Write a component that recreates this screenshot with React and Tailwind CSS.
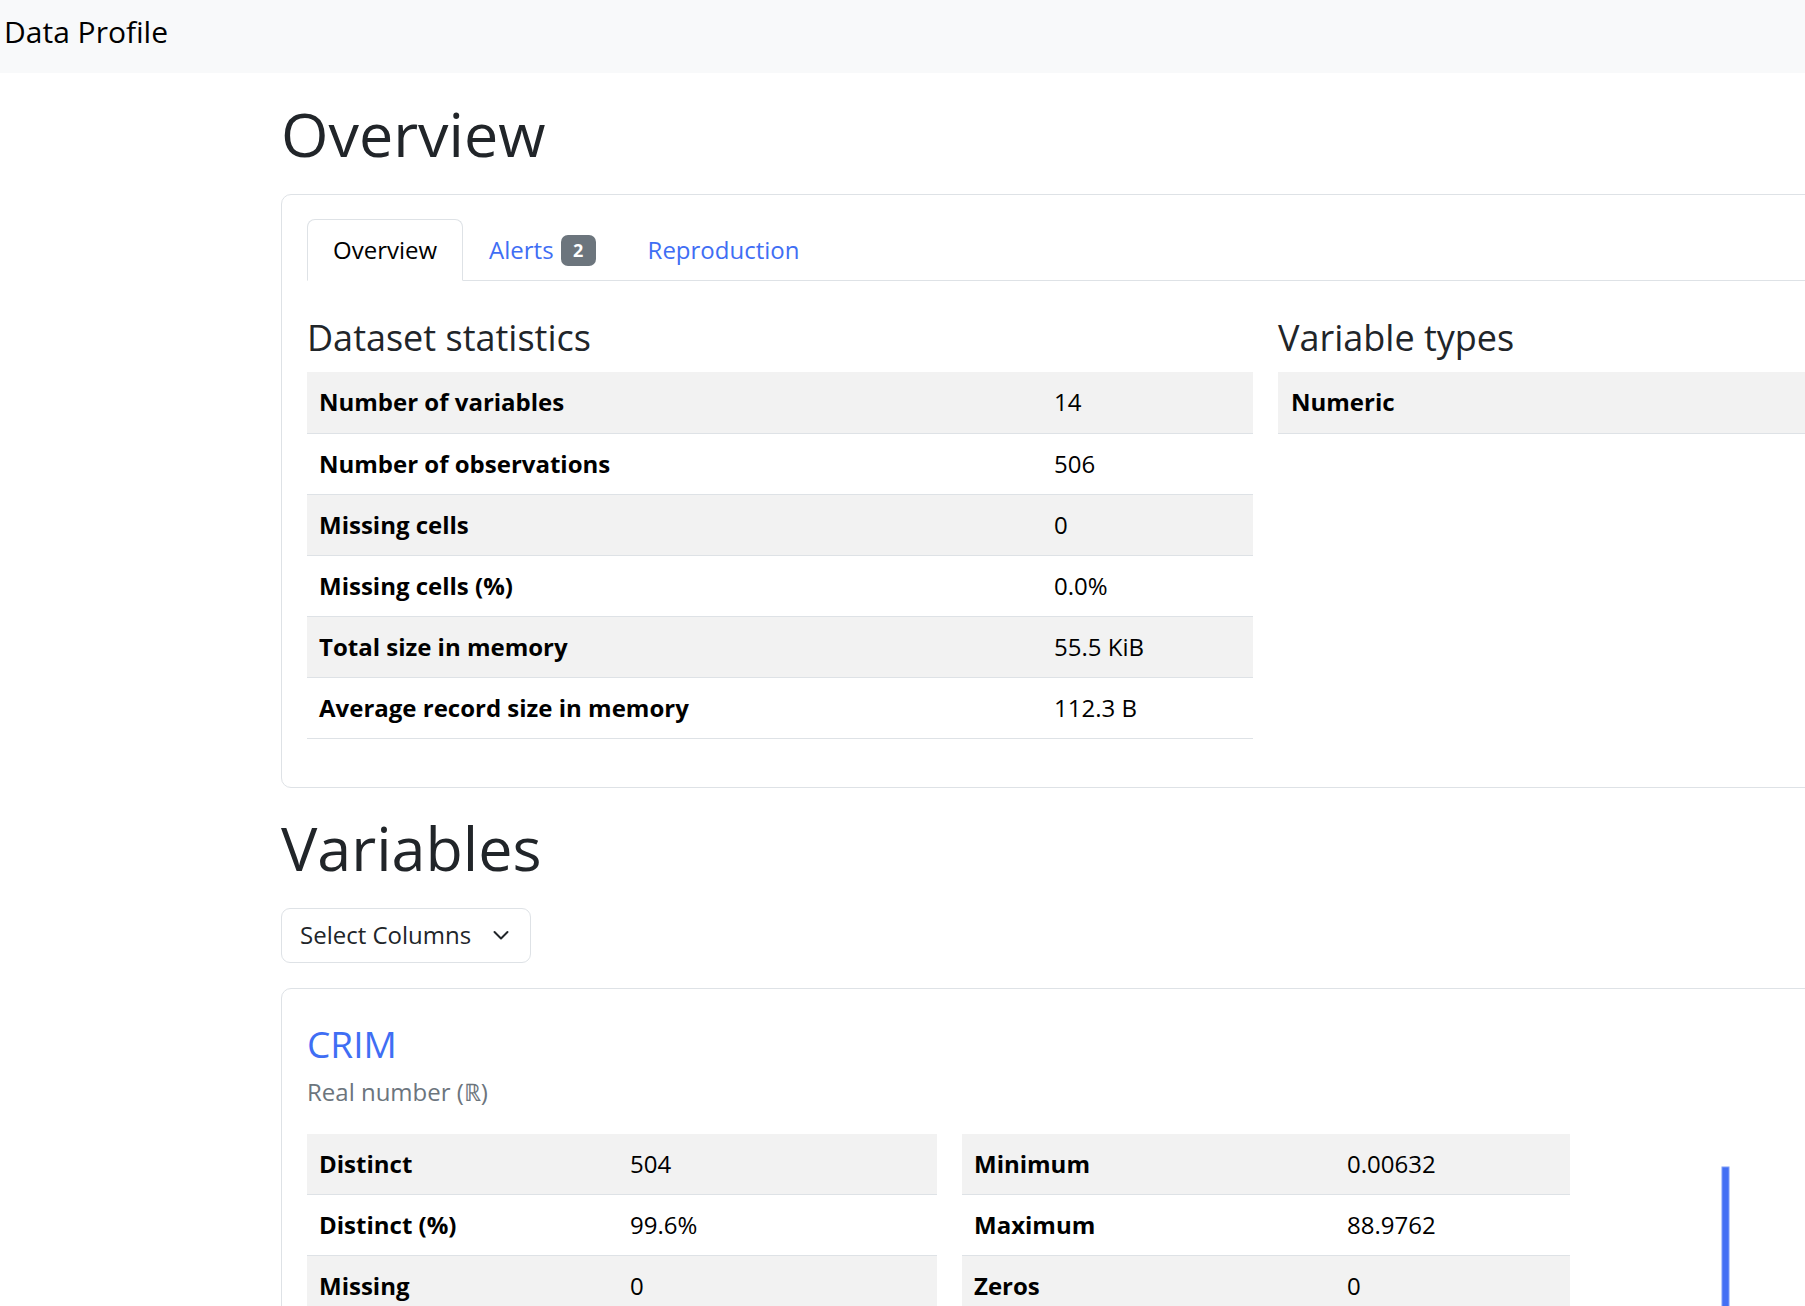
import React from 'react';

const LINK = 'text-[#3f6ef4]';

const datasetStats = [
  ['Number of variables', '14'],
  ['Number of observations', '506'],
  ['Missing cells', '0'],
  ['Missing cells (%)', '0.0%'],
  ['Total size in memory', '55.5 KiB'],
  ['Average record size in memory', '112.3 B'],
];

const crimLeft = [
  ['Distinct', '504'],
  ['Distinct (%)', '99.6%'],
  ['Missing', '0'],
  ['Missing (%)', '0.0%'],
];

const crimRight = [
  ['Minimum', '0.00632'],
  ['Maximum', '88.9762'],
  ['Zeros', '0'],
  ['Zeros (%)', '0.0%'],
];

function StatTable({ rows, width, labelWidth }) {
  return (
    <table className="border-collapse text-[24px] leading-[36px] text-black" style={{ width }}>
      <tbody>
        {rows.map(([label, value], i) => (
          <tr key={label} className={`border-b border-[#dee2e6] ${i % 2 === 0 ? 'bg-[#f2f2f2]' : 'bg-white'}`}>
            <th className="h-[61px] px-[12px] py-0 text-left font-bold" style={{ width: labelWidth }}>{label}</th>
            <td className="h-[61px] px-[12px] py-0">{value}</td>
          </tr>
        ))}
      </tbody>
    </table>
  );
}

function Tabs() {
  return (
    <ul className="flex border-b border-[#dee2e6] text-[24px] leading-[36px]">
      <li className="-mb-px">
        <span className="block rounded-t-[8px] border border-[#dee2e6] border-b-white bg-white px-[25px] py-[12px] text-black">Overview</span>
      </li>
      <li className="-mb-px">
        <span className={`flex items-center rounded-t-[8px] border border-transparent px-[25px] py-[12px] ${LINK}`}>
          Alerts
          <span className="ml-[7px] flex h-[31px] w-[35px] items-center justify-center rounded-[7px] bg-[#6c757d] text-[18px] font-bold leading-none text-white">2</span>
        </span>
      </li>
      <li className="-mb-px">
        <span className={`block rounded-t-[8px] border border-transparent px-[25px] py-[12px] ${LINK}`}>Reproduction</span>
      </li>
    </ul>
  );
}

export default function App() {
  return (
    <div className="h-screen w-full overflow-hidden bg-white font-['Open_Sans',sans-serif] text-[#212529]">
      <nav className="h-[73px] bg-[#f8f9fa] pl-[4px] pt-[9px]">
        <span className="text-[30px] leading-[45px] text-black">Data Profile</span>
      </nav>

      <main className="w-[2300px] pl-[281px]">
        <h1 className="mt-[25px] mb-[24px] text-[61px] leading-[72px]">Overview</h1>

        <section className="w-[1970px] rounded-[10px] border border-[#dee2e6] pl-[25px] pt-[24px] pb-[48px]">
          <Tabs />
          <div className="mt-[35px] flex items-start gap-[25px]">
            <div className="w-[946px]">
              <h4 className="mb-[13px] text-[36px] leading-[43px]">Dataset statistics</h4>
              <StatTable rows={datasetStats} width={946} labelWidth={735} />
            </div>
            <div className="w-[946px]">
              <h4 className="mb-[13px] text-[36px] leading-[43px]">Variable types</h4>
              <table className="w-full border-collapse text-[24px] leading-[36px] text-black">
                <tbody>
                  <tr className="border-b border-[#dee2e6] bg-[#f2f2f2]">
                    <th className="h-[61px] w-[735px] px-[13px] py-0 text-left font-bold">Numeric</th>
                    <td className="h-[61px] px-[12px] py-0">14</td>
                  </tr>
                </tbody>
              </table>
            </div>
          </div>
        </section>

        <h1 className="mt-[24px] mb-[24px] text-[61px] leading-[72px]">Variables</h1>

        <button className="flex h-[55px] w-[250px] items-center justify-between rounded-[9px] border border-[#dee2e6] bg-white pl-[18px] pr-[21px] text-[24px] leading-[36px] text-[#212529]">
          <span>Select Columns</span>
          <svg width="16" height="11" viewBox="0 0 16 11" fill="none">
            <path d="M1.5 2 L8 8.5 L14.5 2" stroke="#212529" strokeWidth="2" strokeLinecap="round" strokeLinejoin="round" />
          </svg>
        </button>

        <section className="mt-[25px] w-[1970px] rounded-[10px] border border-[#dee2e6] pl-[25px] pt-[33px] pb-[24px]">
          <h4 className={`text-[37px] leading-[43px] ${LINK}`}>CRIM</h4>
          <p className="mt-[9px] text-[24px] leading-[36px] text-[#6c757d]">Real number (ℝ)</p>
          <div className="mt-[24px] flex items-start gap-[25px]">
            <StatTable rows={crimLeft} width={630} labelWidth={311} />
            <StatTable rows={crimRight} width={608} labelWidth={373} />
            <div className="w-[400px]">
              <svg width="400" height="320" viewBox="0 0 400 320">
                <rect x="127" y="33" width="7" height="287" fill="#4470f4" stroke="#7c9cf7" strokeWidth="1" />
              </svg>
            </div>
          </div>
        </section>
      </main>
    </div>
  );
}
